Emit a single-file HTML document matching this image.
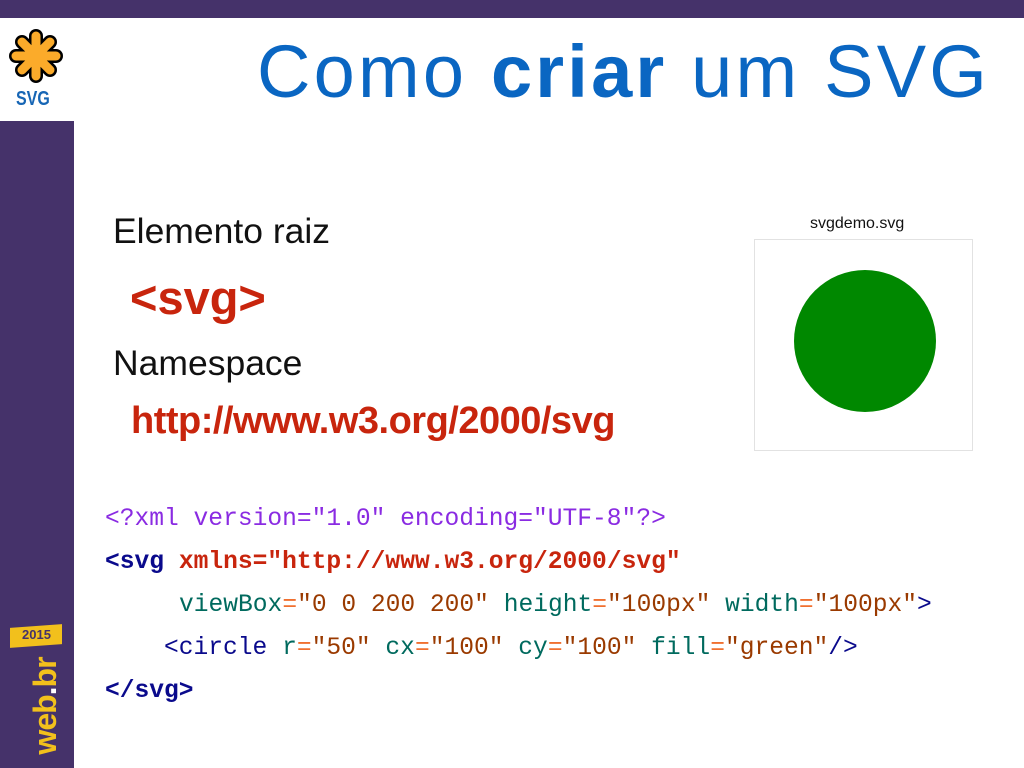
<!DOCTYPE html>
<html><head><meta charset="utf-8"><style>
body{margin:0;width:1024px;height:768px;position:relative;overflow:hidden;background:#fff;font-family:"Liberation Sans",sans-serif}
.a{position:absolute;white-space:nowrap}
.code{font-family:"Liberation Mono",monospace;font-size:24.6px;line-height:1}
</style></head><body>
<div class="a" style="left:0;top:0;width:1024px;height:18px;background:#45326a"></div>
<div class="a" style="left:0;top:121px;width:74px;height:647px;background:#45326a"></div>
<svg class="a" style="left:6px;top:26px" width="60" height="60" viewBox="-30 -30 60 60">
<g stroke="#000" stroke-width="14" stroke-linecap="round">
<line x1="0" y1="-20" x2="0" y2="20"/><line x1="-20" y1="0" x2="20" y2="0"/><line x1="-14" y1="-14" x2="14" y2="14"/><line x1="-14" y1="14" x2="14" y2="-14"/></g>
<g stroke="#fbab2a" stroke-width="9" stroke-linecap="round">
<line x1="0" y1="-20" x2="0" y2="20"/><line x1="-20" y1="0" x2="20" y2="0"/><line x1="-14" y1="-14" x2="14" y2="14"/><line x1="-14" y1="14" x2="14" y2="-14"/></g></svg>
<div class="a" style="left:16px;top:88px;font-size:20px;font-weight:bold;color:#1766b5;transform:scaleX(.8);transform-origin:left">SVG</div>
<div class="a" style="left:10px;top:626px;width:52px;height:20px;background:#f2c01c;transform:skewY(-4deg)"></div>
<div class="a" style="left:22px;top:627px;font-size:13px;font-weight:bold;color:#45326a">2015</div>
<div class="a" style="left:-5px;top:688px;width:100px;height:36px;font-size:32px;line-height:36px;font-weight:bold;color:#f2c01c;transform:rotate(-90deg);text-align:center;letter-spacing:-1px">web<span style="color:#fff">.</span>br</div>
<div class="a" style="left:257px;top:29px;font-size:74px;color:#0a66c2;letter-spacing:3.2px">Como <b>criar</b> um SVG</div>
<div class="a" style="left:113px;top:211px;font-size:35.5px;color:#111">Elemento raiz</div>
<div class="a" style="left:130px;top:270px;font-size:47px;font-weight:bold;color:#c8250d">&lt;svg&gt;</div>
<div class="a" style="left:113px;top:343px;font-size:35.5px;color:#111">Namespace</div>
<div class="a" style="left:131px;top:400px;font-size:38px;font-weight:bold;color:#c8250d;letter-spacing:-0.5px">http://www.w3.org/2000/svg</div>
<div class="a" style="left:810px;top:215px;font-size:16px;color:#111">svgdemo.svg</div>
<div class="a" style="left:754px;top:239px;width:217px;height:210px;border:1px solid #e2e2e2"></div>
<svg class="a" style="left:794px;top:270px" width="142" height="142"><circle cx="71" cy="71" r="71" fill="#008800"/></svg>
<div class="a code" style="left:105px;top:508px;color:#8a2be2">&lt;?xml version="1.0" encoding="UTF-8"?&gt;</div>
<div class="a code" style="left:105px;top:551px;font-weight:bold"><span style="color:#0a0a8c">&lt;svg</span> <span style="color:#c8250d">xmlns="http://www.w3.org/2000/svg"</span></div>
<div class="a code" style="left:179px;top:594px"><span style="color:#006a5e">viewBox</span><span style="color:#f07030">=</span><span style="color:#9a3a00">"0 0 200 200"</span> <span style="color:#006a5e">height</span><span style="color:#f07030">=</span><span style="color:#9a3a00">"100px"</span> <span style="color:#006a5e">width</span><span style="color:#f07030">=</span><span style="color:#9a3a00">"100px"</span><span style="color:#0a0a8c">&gt;</span></div>
<div class="a code" style="left:164px;top:637px"><span style="color:#0a0a8c">&lt;circle</span> <span style="color:#006a5e">r</span><span style="color:#f07030">=</span><span style="color:#9a3a00">"50"</span> <span style="color:#006a5e">cx</span><span style="color:#f07030">=</span><span style="color:#9a3a00">"100"</span> <span style="color:#006a5e">cy</span><span style="color:#f07030">=</span><span style="color:#9a3a00">"100"</span> <span style="color:#006a5e">fill</span><span style="color:#f07030">=</span><span style="color:#9a3a00">"green"</span><span style="color:#0a0a8c">/&gt;</span></div>
<div class="a code" style="left:105px;top:680px;font-weight:bold;color:#0a0a8c">&lt;/svg&gt;</div>
</body></html>
